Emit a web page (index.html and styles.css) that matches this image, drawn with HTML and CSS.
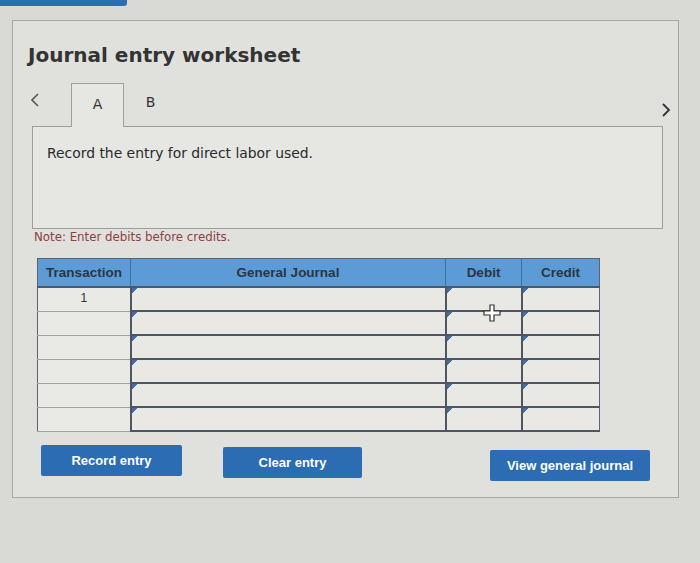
FILE: index.html
```html
<!DOCTYPE html>
<html>
<head>
<meta charset="utf-8">
<link rel="stylesheet" href="styles.css">
</head>
<body>
<div class="topbar"></div>
<div class="panel">
  <h1 class="title">Journal entry worksheet</h1>
  <div class="tabs">
    <svg class="chev" width="12" height="16" viewBox="0 0 12 16"><path d="M9 2 L3 8 L9 14" fill="none" stroke="#555" stroke-width="1.6"/></svg>
    <div class="tab active">A</div>
    <div class="tab">B</div>
    <div class="spacer"></div>
    <svg class="chev next" width="12" height="16" viewBox="0 0 12 16"><path d="M3 2 L9 8 L3 14" fill="none" stroke="#333" stroke-width="1.8"/></svg>
  </div>
  <div class="prompt">Record the entry for direct labor used.</div>
  <p class="note">Note: Enter debits before credits.</p>
  <div class="tablewrap">
    <table class="journal">
      <colgroup><col class="c1"><col class="c2"><col class="c3"><col class="c4"></colgroup>
      <thead>
        <tr><th class="th-tx">Transaction</th><th>General Journal</th><th>Debit</th><th>Credit</th></tr>
      </thead>
      <tbody>
        <tr><td class="tx">1</td><td class="in"></td><td class="in"></td><td class="in"></td></tr>
        <tr><td class="tx"></td><td class="in"></td><td class="in"></td><td class="in"></td></tr>
        <tr><td class="tx"></td><td class="in"></td><td class="in"></td><td class="in"></td></tr>
        <tr><td class="tx"></td><td class="in"></td><td class="in"></td><td class="in"></td></tr>
        <tr><td class="tx"></td><td class="in"></td><td class="in"></td><td class="in"></td></tr>
        <tr><td class="tx"></td><td class="in"></td><td class="in"></td><td class="in"></td></tr>
      </tbody>
    </table>
    <svg class="cursor" width="18" height="18" viewBox="0 0 18 18"><path d="M7 1 H11 V7 H17 V11 H11 V17 H7 V11 H1 V7 H7 Z" fill="#fff" stroke="#333" stroke-width="1.2"/></svg>
  </div>
  <div class="buttons">
    <button class="btn b1">Record entry</button>
    <button class="btn b2">Clear entry</button>
    <button class="btn b3">View general journal</button>
  </div>
</div>
</body>
</html>
```
FILE: styles.css
```css
html, body {
  margin: 0;
  padding: 0;
  background: #d9d9d6;
  font-family: "DejaVu Sans", Verdana, sans-serif;
}
.topbar {
  width: 127px;
  height: 6px;
  background: #2f6db3;
  border-bottom-right-radius: 3px;
}
.panel {
  margin: 14px 0 0 12px;
  width: 667px;
  height: 478px;
  box-sizing: border-box;
  border: 1px solid #a6a6a3;
  background: #e0e0dd;
}
.title {
  margin: 0;
  padding: 22px 0 0 15px;
  font-size: 20px;
  line-height: 24px;
  font-weight: bold;
  color: #333;
}
.tabs {
  display: flex;
  align-items: center;
  margin-top: 15px;
  padding-left: 16px;
  height: 44px;
}
.chev { display: block; margin-top: -8px; }
.tab {
  width: 53px;
  height: 44px;
  box-sizing: border-box;
  display: flex;
  align-items: center;
  justify-content: center;
  font-size: 14px;
  color: #333;
  padding-bottom: 4px;
}
.tab.active {
  margin-left: 30px;
  border: 1px solid #a0a09d;
  border-bottom: none;
  background: #e6e6e3;
  position: relative;
  top: 1px;
}
.spacer { flex: 1; }
.next { margin-right: 6px; margin-top: 12px; }
.prompt {
  margin-left: 19px;
  width: 631px;
  height: 103px;
  box-sizing: border-box;
  border: 1px solid #9d9d9a;
  background: #e6e6e3;
  padding: 18px 14px;
  font-size: 13.9px;
  color: #2a2a2a;
}
.note {
  margin: 1px 0 0 21px;
  font-size: 11.8px;
  line-height: 15px;
  color: #8c4040;
}
.tablewrap {
  position: relative;
  margin: 13px 0 0 24px;
  width: 562px;
}
.journal {
  border-collapse: collapse;
  table-layout: fixed;
  width: 562px;
  font-family: "Liberation Sans", Arial, sans-serif;
  border: 1px solid #5a6470;
}
.c1 { width: 93px; }
.c2 { width: 315px; }
.c3 { width: 76px; }
.c4 { width: 78px; }
.journal th {
  height: 27px;
  padding: 0;
  background: #5d9bd6;
  color: #2a3644;
  font-size: 13.5px;
  font-weight: bold;
  border-left: 1px solid #3f6f9f;
  border-bottom: 2px solid #4a5a6c;
}
.journal th.th-tx { border-left: none; }
.journal tbody tr { height: 24px; }
.journal td {
  height: 22px;
  padding: 0;
  line-height: 20px;
  vertical-align: top;
}
.journal td.tx {
  background: #e9e9e6;
  border-bottom: 1px solid #a2a29f;
  text-align: center;
  font-size: 12px;
  color: #333;
}
.journal td.in {
  background: #e8e8e5 linear-gradient(135deg, #3f6ea8 0, #3f6ea8 4px, transparent 4px) no-repeat;
  background-size: 10px 10px;
  border-left: 2px solid #4e5662;
  border-bottom: 2px solid #4e5662;
}
.cursor {
  position: absolute;
  left: 446px;
  top: 46px;
}
.buttons {
  display: flex;
  margin: 13px 0 0 28px;
}
.btn {
  height: 31px;
  border: none;
  border-radius: 2px;
  background: #2b6cb3;
  color: #fff;
  font-family: "Liberation Sans", Arial, sans-serif;
  font-weight: bold;
  font-size: 13px;
  padding: 0;
}
.b1 { width: 141px; }
.b2 { width: 139px; margin-left: 41px; margin-top: 2px; }
.b3 { width: 160px; margin-left: 128px; margin-top: 5px; }
```
